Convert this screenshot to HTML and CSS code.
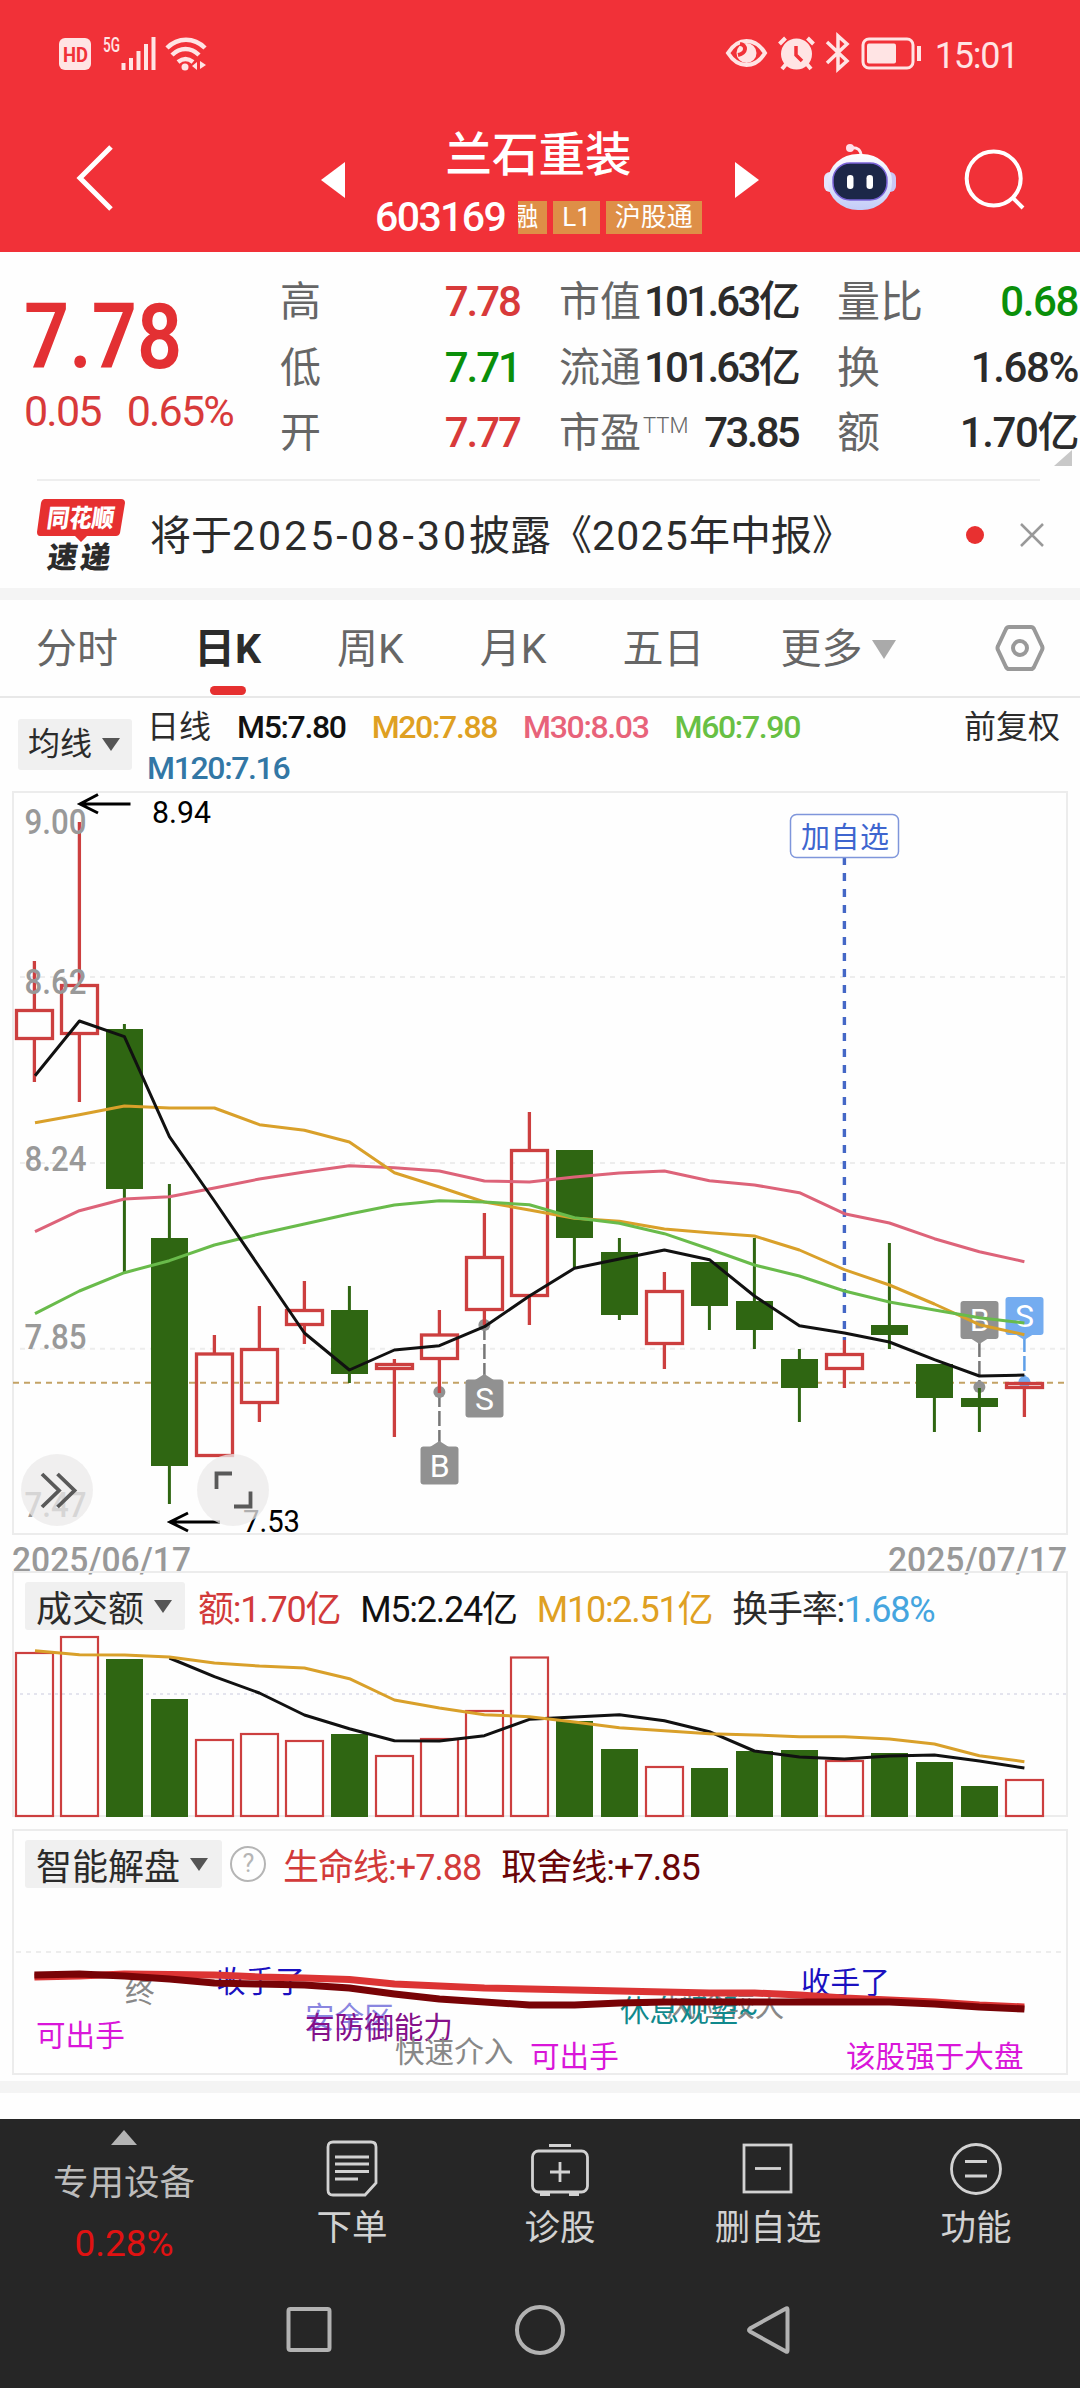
FILE: index.html
```html
<!DOCTYPE html>
<html lang="zh-CN">
<head>
    <meta charset="UTF-8">
    <meta name="viewport" content="width=device-width, initial-scale=1.0">
    <title>兰石重装 603169</title>
    <link rel="stylesheet" href="styles.css">
</head>
<body>
    <header class="header">
        <div class="status-bar">
            <svg class="status-left" width="150" height="40" viewBox="58 34 150 40">
                <rect x="59" y="38" width="32" height="32" rx="6" fill="#ffe4e4"/>
                <text x="63" y="62" font-size="21" font-weight="700" fill="#f13138" textLength="25" lengthAdjust="spacingAndGlyphs">HD</text>
                <text x="103" y="52" font-size="20" font-weight="500" fill="#ffe4e4" textLength="17" lengthAdjust="spacingAndGlyphs">5G</text>
                <path d="M123.500 63v7M131 58v12M138.500 51v19M146 44v26M153.500 37v33" stroke="#ffe4e4" stroke-width="4"/>
                <g fill="none" stroke="#ffe4e4" stroke-width="4.500">
                    <path d="M167 48c11-11 27-11 38 0M172 55c8-8 19-8 27 0M178 62c5-4 10-4 15 0"/>
                </g>
                <circle cx="185" cy="67" r="3.500" fill="#ffe4e4"/>
                <path d="M192 66l5-4v8M200 61v8l6-4z" fill="#ffe4e4"/>
            </svg>
            <div class="status-right">
                <svg width="200" height="42" viewBox="724 34 200 42" fill="none" stroke="#ffe4e4" stroke-width="4">
                    <path d="M729 54c10-16 27-16 37 0c-10 16-27 16-37 0z"/>
                    <circle cx="747.500" cy="54" r="10" fill="#ffe4e4" stroke="none"/>
                    <path d="M741 45c7 1 7 9-2 11" stroke="#f13138" stroke-width="4"/>
                    <circle cx="797.500" cy="55" r="15.500" fill="#ffe4e4" stroke="none"/>
                    <path d="M780.500 45l6-6M814.500 45l-6-6M788 64l-5 6M807 64l5 6"/>
                    <path d="M797 47v9l6 6" stroke="#f13138" stroke-width="3.500"/>
                    <path d="M828 43l20 19l-9 8v-33l9 8l-20 19" stroke-width="3.500"/>
                    <rect x="864" y="40" width="50" height="29" rx="6" stroke-width="3"/>
                    <rect x="868" y="44.500" width="29" height="20" rx="2" fill="#ffe4e4" stroke="none"/>
                    <path d="M920 47v15"/>
                </svg>
                <span class="clock">15:01</span>
            </div>
        </div>
        <div class="title-bar">
            <svg class="back" width="40" height="70" viewBox="0 0 40 70"><path d="M36 4L5 35l31 31" fill="none" stroke="#fff" stroke-width="5"/></svg>
            <svg class="prev" width="24" height="36" viewBox="0 0 24 36"><path d="M24 0v36L0 18z" fill="#fff"/></svg>
            <div class="stock">
                <h1>兰石重装</h1>
                <div class="code-row">
                    <span class="code">603169</span>
                    <span class="tag tag-cut"><span>融</span></span>
                    <span class="tag">L1</span>
                    <span class="tag">沪股通</span>
                </div>
            </div>
            <svg class="next" width="24" height="36" viewBox="0 0 24 36"><path d="M0 0v36L24 18z" fill="#fff"/></svg>
            <svg class="robot" width="74" height="70" viewBox="824 142 74 70">
                <defs>
                    <linearGradient id="head" x1="0" y1="0" x2="0" y2="1">
                        <stop offset="0" stop-color="#ffffff"/>
                        <stop offset="1" stop-color="#c3ccf8"/>
                    </linearGradient>
                </defs>
                <path d="M851 148c8-1 11 2 11 8" fill="none" stroke="#ffe9ef" stroke-width="3"/>
                <circle cx="851" cy="148" r="4" fill="#ffe0ea"/>
                <rect x="825" y="172" width="14" height="20" rx="6" fill="#e6e4fb"/>
                <rect x="883" y="172" width="14" height="20" rx="6" fill="#c9c6f4"/>
                <rect x="829" y="154" width="64" height="56" rx="30" ry="27" fill="url(#head)"/>
                <rect x="834" y="163" width="54" height="37" rx="17" fill="#1c2748" stroke="#7a63d8" stroke-width="1.500"/>
                <rect x="848" y="175" width="6.500" height="14" rx="3.200" fill="#fff"/>
                <rect x="867.500" y="175" width="6.500" height="14" rx="3.200" fill="#fff"/>
            </svg>
            <svg class="search" width="62" height="62" viewBox="964 148 62 62" fill="none" stroke="#fff" stroke-width="4">
                <circle cx="994.700" cy="178.500" r="27"/>
                <path d="M1013 197l11 11"/>
            </svg>
        </div>
    </header>

    <section class="quote">
        <div class="price-box">
            <div class="price">7.78</div>
            <div class="change"><span>0.05</span><span>0.65%</span></div>
        </div>
        <div class="stat-col">
            <div class="stat"><span class="label">高</span><span class="up">7.78</span></div>
            <div class="stat"><span class="label">低</span><span class="down">7.71</span></div>
            <div class="stat"><span class="label">开</span><span class="up">7.77</span></div>
        </div>
        <div class="stat-col cap-col">
            <div class="stat"><span class="label">市值</span><span>101.63亿</span></div>
            <div class="stat"><span class="label">流通</span><span>101.63亿</span></div>
            <div class="stat"><span class="label">市盈<sup>TTM</sup></span><span>73.85</span></div>
        </div>
        <div class="stat-col last-col">
            <div class="stat"><span class="label">量比</span><span class="down">0.68</span></div>
            <div class="stat"><span class="label">换</span><span>1.68%</span></div>
            <div class="stat"><span class="label">额</span><span>1.70亿</span></div>
        </div>
        <span class="corner"></span>
    </section>

    <section class="news">
        <div class="news-logo">
            <svg width="90" height="74" viewBox="36 497 90 74">
                <path d="M45 498h76q4 0 4 4l-5 30q-1 3-4 3h-29l-6 6l-6-6h-35q-3 0-3-4l4-29q1-4 4-4z" fill="#e63030"/>
                <g font-weight="900" transform="skewX(-8)">
                    <text x="120" y="526" font-size="25" fill="#fff" textLength="67" lengthAdjust="spacingAndGlyphs">同花顺</text>
                    <text x="126" y="567" font-size="30" fill="#2b2b2b" textLength="63">速递</text>
                </g>
            </svg>
        </div>
        <p>将于<span class="date">2025-08-30</span>披露《<span class="year">2025</span>年中报》</p>
        <i class="dot"></i>
        <svg class="close" width="26" height="26" viewBox="0 0 26 26"><path d="M2 2l22 22M24 2L2 24" stroke="#999" stroke-width="2.500"/></svg>
    </section>

    <nav class="tabs">
        <a>分时</a>
        <a class="active">日K</a>
        <a>周K</a>
        <a>月K</a>
        <a>五日</a>
        <a class="more">更多<i class="caret"></i></a>
        <svg class="setting" width="50" height="48" viewBox="0 0 50 48" fill="none" stroke="#999" stroke-width="4">
            <path d="M14 3h22q2 0 3 2l8 17q1 2 0 4l-8 17q-1 2-3 2h-22q-2 0-3-2l-8-17q-1-2 0-4l8-17q1-2 3-2z"/>
            <circle cx="25" cy="24" r="7"/>
        </svg>
    </nav>

    <section class="legend">
        <span class="select">均线<i class="caret dark"></i></span>
        <div class="ma-list">
            <span class="name">日线</span>
            <span class="ma5">M5:7.80</span>
            <span class="ma20">M20:7.88</span>
            <span class="ma30">M30:8.03</span>
            <span class="ma60">M60:7.90</span>
            <span class="ma120">M120:7.16</span>
        </div>
        <span class="adjust">前复权</span>
    </section>

    <svg class="kline" width="1080" height="781" viewBox="0 790 1080 781">
        <rect class="frame" x="13" y="792" width="1054" height="742"/>
        <path class="grid" d="M20 977H1066M20 1163H1066M20 1348.700H1066"/>
        <path d="M13 1382.700H1066" stroke="#c3a265" stroke-width="2" stroke-dasharray="6 5"/>

        <!-- buy / sell markers -->
        <g class="marker">
            <path class="lead" d="M439.400 1392V1446M484.400 1325V1378M979.400 1342V1382"/>
            <circle cx="439.400" cy="1392" r="6"/>
            <circle cx="484.400" cy="1325" r="6"/>
            <circle cx="979.400" cy="1387" r="6"/>
            <path d="M430 1447l9.400-6l9.400 6zM475 1380l9.400-6l9.400 6zM970 1338l9.400 6l9.400-6z"/>
            <rect x="420.500" y="1446.500" width="38" height="38" rx="3"/>
            <rect x="465.500" y="1379.500" width="38" height="38" rx="3"/>
            <rect x="960.500" y="1301" width="38" height="38" rx="3"/>
            <text x="439.600" y="1477">B</text>
            <text x="484.600" y="1410">S</text>
            <text x="979.600" y="1331">B</text>
        </g>
        <g class="marker blue">
            <path class="lead" d="M1024.400 1337V1380"/>
            <circle cx="1024.400" cy="1382" r="6"/>
            <path d="M1015 1334l9.400 6l9.400-6z"/>
            <rect x="1005.500" y="1297" width="38" height="38" rx="3"/>
            <text x="1024.600" y="1327">S</text>
        </g>
        <path d="M844.400 857V1340" stroke="#4467c6" stroke-width="3.400" stroke-dasharray="8 8"/>
        <rect x="790.500" y="814.500" width="108" height="43" rx="6" fill="#fff" stroke="#7f96db" stroke-width="1.500"/>
        <text x="801" y="847.500" font-size="29" fill="#3f66cf" textLength="88">加自选</text>

        <!-- candles -->
        <g class="red">
            <path d="M34.400 961V1010M34.400 1038V1082M79.400 822V985M79.400 1034V1102M214.400 1335V1353M259.400 1306V1349M259.400 1403V1422M304.400 1281V1310M304.400 1325V1344M394.400 1359V1363M394.400 1370V1437M439.400 1310V1334M439.400 1360V1393M484.400 1213V1257M484.400 1310V1325M529.400 1112V1150M529.400 1296V1325M664.400 1272V1291M664.400 1344V1369M844.400 1340V1354M844.400 1369V1388M1024.400 1389V1417"/>
            <rect x="16.500" y="1010.500" width="36" height="28"/>
            <rect x="61.500" y="985.500" width="36" height="48"/>
            <rect x="196.500" y="1354" width="36" height="101.500"/>
            <rect x="241.500" y="1349.500" width="36" height="53"/>
            <rect x="286.500" y="1310.500" width="36" height="14"/>
            <rect x="376.500" y="1364.500" width="36" height="4"/>
            <rect x="421.500" y="1335" width="36" height="23.500"/>
            <rect x="466.500" y="1257.500" width="36" height="52"/>
            <rect x="511.500" y="1150.500" width="36" height="145"/>
            <rect x="646.500" y="1291.500" width="36" height="52"/>
            <rect x="826.500" y="1354.500" width="36" height="14"/>
            <rect x="1006.500" y="1383.500" width="36" height="4"/>
        </g>
        <g class="green">
            <path d="M124.400 1024V1272M169.400 1184V1504M349.400 1286V1383M574.400 1150V1268M619.400 1238V1320M709.400 1262V1330M754.400 1238V1349M799.400 1349V1422M889.400 1243V1349M934.400 1364V1432M979.400 1388V1432"/>
            <rect x="106" y="1029" width="37" height="160"/>
            <rect x="151" y="1238" width="37" height="228"/>
            <rect x="331" y="1310" width="37" height="64"/>
            <rect x="556" y="1150" width="37" height="88"/>
            <rect x="601" y="1252" width="37" height="63"/>
            <rect x="691" y="1262" width="37" height="44"/>
            <rect x="736" y="1301" width="37" height="29"/>
            <rect x="781" y="1359" width="37" height="29"/>
            <rect x="871" y="1325" width="37" height="10"/>
            <rect x="916" y="1364" width="37" height="34"/>
            <rect x="961" y="1398" width="37" height="9"/>
        </g>

        <!-- moving averages -->
        <g class="lines">
            <polyline stroke="#dd6379" points="35,1231.700 79.400,1210.700 124.400,1199 169.400,1196.700 214.400,1188 259.400,1179 304.400,1172 349.400,1165.700 394.400,1167.700 439.400,1171 484.400,1181 529.400,1182 574.400,1177 619.400,1173 664.400,1171 709.400,1180.700 754.400,1185 799.400,1192.700 844.400,1213.700 889.400,1223 934.400,1238.700 979.400,1251.700 1024.400,1261.700"/>
            <polyline stroke="#d9a02a" points="35,1122.700 79.400,1114.700 124.400,1106 169.400,1108 214.400,1108 259.400,1124.700 304.400,1130.300 349.400,1142 394.400,1172.700 439.400,1187 484.400,1202 529.400,1210 574.400,1218.300 619.400,1221.300 664.400,1229 709.400,1232.700 754.400,1236 799.400,1250 844.400,1269.700 889.400,1285 934.400,1304 979.400,1324.700 1024.400,1334.700"/>
            <polyline stroke="#69bb4b" points="35,1313.700 79.400,1291 124.400,1272.700 169.400,1260.700 214.400,1245 259.400,1234 304.400,1224 349.400,1214 394.400,1205 439.400,1200.700 484.400,1202 529.400,1204.700 574.400,1217.700 619.400,1223.300 664.400,1233.700 709.400,1249 754.400,1265 799.400,1276 844.400,1291 889.400,1302 934.400,1310 979.400,1317.700 1024.400,1323"/>
            <polyline stroke="#111" points="35,1075.700 79.400,1021 124.400,1036.700 169.400,1136.700 214.400,1201 259.400,1267 304.400,1333 349.400,1370 394.400,1350 439.400,1345.700 484.400,1326.700 529.400,1296 574.400,1268.300 619.400,1259 664.400,1250 709.400,1259.700 754.400,1296 799.400,1325.700 844.400,1333 889.400,1342 934.400,1359.700 979.400,1376 1024.400,1375"/>
        </g>

        <g class="axis">
            <text x="24.500" y="834" textLength="62" lengthAdjust="spacingAndGlyphs">9.00</text>
            <text x="24.500" y="993.500" textLength="62" lengthAdjust="spacingAndGlyphs">8.62</text>
            <text x="24.500" y="1170.500" textLength="62" lengthAdjust="spacingAndGlyphs">8.24</text>
            <text x="24.500" y="1348.500" textLength="62" lengthAdjust="spacingAndGlyphs">7.85</text>
            <text x="24.500" y="1517" textLength="62" lengthAdjust="spacingAndGlyphs">7.47</text>
            <text x="12" y="1572" textLength="179" lengthAdjust="spacingAndGlyphs">2025/06/17</text>
            <text x="888" y="1572" textLength="179" lengthAdjust="spacingAndGlyphs">2025/07/17</text>
        </g>
        <g fill="none" stroke="#000" stroke-width="3">
            <path d="M130.500 804H80M98 794.500L80 804l18 9M220 1522H170M188 1513l-18 9l18 9"/>
        </g>
        <text x="152" y="823" font-size="31" textLength="59" lengthAdjust="spacingAndGlyphs">8.94</text>
        <text x="243" y="1532" font-size="31" textLength="57" lengthAdjust="spacingAndGlyphs">7.53</text>

        <!-- floating buttons -->
        <g fill="#ebe9e9" fill-opacity=".75">
            <circle cx="57" cy="1490" r="36"/>
            <circle cx="233" cy="1490" r="36"/>
        </g>
        <g fill="none" stroke="#595959" stroke-width="3.800">
            <path d="M42 1474l17 16.500l-17 16.500M57.500 1474l17 16.500l-17 16.500"/>
            <path d="M216.500 1489v-15.500h15.500M234 1506.500h16.500v-15"/>
        </g>
    </svg>

    <section class="panel volume">
        <svg width="1080" height="258" viewBox="0 1571 1080 258">
            <rect class="frame" x="13" y="1572" width="1054" height="244"/>
            <path d="M20 1694H1066" stroke="#e4e4ee" stroke-width="2" stroke-dasharray="3 4"/>
            <g class="red thin">
                <rect x="16" y="1653" width="37" height="163"/>
                <rect x="61" y="1637" width="37" height="179"/>
                <rect x="196" y="1740" width="37" height="76"/>
                <rect x="241" y="1734" width="37" height="82"/>
                <rect x="286" y="1741" width="37" height="75"/>
                <rect x="376" y="1756" width="37" height="60"/>
                <rect x="421" y="1739" width="37" height="77"/>
                <rect x="466" y="1711" width="37" height="105"/>
                <rect x="511" y="1657.500" width="37" height="158.500"/>
                <rect x="646" y="1767" width="37" height="49"/>
                <rect x="826" y="1761" width="37" height="55"/>
                <rect x="1006" y="1780" width="37" height="36"/>
            </g>
            <g class="green">
                <rect x="106" y="1659" width="37" height="158"/>
                <rect x="151" y="1699" width="37" height="118"/>
                <rect x="331" y="1734" width="37" height="83"/>
                <rect x="556" y="1721" width="37" height="96"/>
                <rect x="601" y="1749" width="37" height="68"/>
                <rect x="691" y="1768" width="37" height="49"/>
                <rect x="736" y="1751" width="37" height="66"/>
                <rect x="781" y="1750" width="37" height="67"/>
                <rect x="871" y="1753" width="37" height="64"/>
                <rect x="916" y="1762" width="37" height="55"/>
                <rect x="961" y="1786" width="37" height="31"/>
            </g>
            <g class="lines">
                <polyline stroke="#111" points="169.400,1658 214.400,1676.700 259.400,1693 304.400,1715 349.400,1728.700 394.400,1740.700 439.400,1741 484.400,1735.700 529.400,1719.300 574.400,1717 619.400,1714.700 664.400,1720.700 709.400,1731.700 754.400,1751 799.400,1757 844.400,1759 889.400,1756 934.400,1755 979.400,1761 1024.400,1768"/>
                <polyline stroke="#d9a02a" points="35,1650.700 79.400,1654.700 124.400,1655 169.400,1657 214.400,1663 259.400,1666 304.400,1668 349.400,1678.700 394.400,1700 439.400,1708 484.400,1714.700 529.400,1716.700 574.400,1722 619.400,1727.700 664.400,1730.700 709.400,1733.700 754.400,1735 799.400,1736.700 844.400,1736.700 889.400,1739 934.400,1744 979.400,1755.700 1024.400,1761.700"/>
            </g>
        </svg>
        <div class="panel-head">
            <span class="select">成交额<i class="caret dark"></i></span>
            <span class="c-red">额:1.70亿</span>
            <span class="c-black">M5:2.24亿</span>
            <span class="ma20">M10:2.51亿</span>
            <span>换手率:<em>1.68%</em></span>
        </div>
    </section>

    <section class="panel smart">
        <svg width="1080" height="248" viewBox="0 1829 1080 248">
            <rect class="frame" x="13" y="1830" width="1054" height="244"/>
            <path class="grid" d="M16 1952H1066"/>
            <g class="tips">
                <text x="36" y="2046" fill="#d916d9">可出手</text>
                <text x="125" y="2001.500" fill="#888">终</text>
                <text x="216" y="1992" fill="#1a10c0">收手了</text>
                <text x="305" y="2028" fill="#8a86e0">安全区</text>
                <text x="305" y="2037.500" fill="#85108a">有防御能力</text>
                <text x="395" y="2061.500" fill="#888">快速介入</text>
                <text x="530" y="2066.500" fill="#d916d9">可出手</text>
                <text x="666" y="2016" fill="#888">风险较大</text>
                <text x="620" y="2021" fill="#10898c">休息观望~</text>
                <text x="801" y="1993" fill="#1a10c0">收手了</text>
                <text x="846" y="2066.500" fill="#d916d9">该股强于大盘</text>
            </g>
            <g class="lines thick">
                <polyline stroke="#dc3434" points="34.400,1977 79.400,1976 124.400,1974 169.400,1974.500 214.400,1975 259.400,1977 304.400,1978 349.400,1979.500 394.400,1984 439.400,1986 484.400,1988 529.400,1989 574.400,1990 619.400,1991 664.400,1992 709.400,1993 754.400,1993 799.400,1995 844.400,1998 889.400,2000 934.400,2002 979.400,2005 1024.400,2007"/>
                <polyline stroke="#780306" points="34.400,1975 79.400,1974 124.400,1976 169.400,1979 214.400,1983 259.400,1984 304.400,1985 349.400,1988 394.400,1994 439.400,1999 484.400,2002 529.400,2005 574.400,2005 619.400,2003 664.400,2002 889.400,2002 934.400,2004 979.400,2007 1024.400,2009"/>
            </g>
        </svg>
        <div class="panel-head">
            <span class="select">智能解盘<i class="caret dark"></i></span>
            <i class="help">?</i>
            <span class="c-red">生命线:+7.88</span>
            <span class="c-dark">取舍线:+7.85</span>
        </div>
    </section>

    <div class="divider"></div>

    <footer class="footer">
        <div class="toolbar">
            <div class="sector">
                <i class="arrow-up"></i>
                <span>专用设备</span>
                <b>0.28%</b>
            </div>
            <div class="tool">
                <svg width="58" height="58" viewBox="0 0 58 58">
                    <path d="M10 2h38q5 0 5 5v36l-11 12H10q-5 0-5-5V7q0-5 5-5zM12 17h34M12 24h34M12 31.500h34M12 39h23"/>
                </svg>
                <span>下单</span>
            </div>
            <div class="tool">
                <svg width="58" height="58" viewBox="0 0 58 58">
                    <rect x="1.500" y="11" width="55" height="41" rx="6"/>
                    <path d="M18 5.500h22M29 22v20M19 32h20M9 54.500h10M38 54.500h10"/>
                </svg>
                <span>诊股</span>
            </div>
            <div class="tool">
                <svg width="58" height="58" viewBox="0 0 58 58">
                    <rect x="5" y="5" width="47" height="47"/>
                    <path d="M16 28.500h26"/>
                </svg>
                <span>删自选</span>
            </div>
            <div class="tool">
                <svg width="58" height="58" viewBox="0 0 58 58">
                    <circle cx="29" cy="29" r="24.500"/>
                    <path d="M18 21.500h22M18 36h22"/>
                </svg>
                <span>功能</span>
            </div>
        </div>
        <svg class="sys-nav" width="1080" height="60" viewBox="0 2300 1080 60">
            <rect x="288.500" y="2309" width="41" height="41" rx="2"/>
            <circle cx="540" cy="2330" r="23"/>
            <path d="M786 2308.500q1.500-1 1.500 1v41q0 2-1.500 1l-36-20q-2-1.500 0-3z"/>
        </svg>
    </footer>
</body>
</html>
```
FILE: styles.css
```css
* {
    box-sizing: border-box;
}

body {
    margin: 0;
    width: 1080px;
    font-family: Roboto, "Noto Sans CJK SC", sans-serif;
    background: #fefefe;
    color: #2b2b2b;
    overflow-x: hidden;
}

svg {
    display: block;
    flex: none;
    overflow: visible;
}

i, em {
    font-style: normal;
}

/* Header */
.header {
    height: 252px;
    background: #f13138;
    color: #fff;
}

.status-bar {
    display: flex;
    justify-content: space-between;
    align-items: center;
    height: 108px;
    padding: 0 62px 0 58px;
}

.status-right {
    display: flex;
    align-items: center;
    gap: 12px;
}

.clock {
    font-size: 36px;
    letter-spacing: -1.3px;
    color: #ffe4e4;
    line-height: 40px;
    padding-top: 4px;
}

.title-bar {
    display: flex;
    align-items: flex-start;
    height: 144px;
    padding-left: 75px;
}

.back {
    margin-top: 35px;
}

.prev {
    margin: 54px 0 0 206px;
}

.stock {
    width: 390px;
    height: 144px;
    padding-top: 15px;
    text-align: center;
}

.stock h1 {
    margin: 0 3px 0 0;
    font-size: 46.500px;
    font-weight: 500;
    line-height: 64px;
}

.code-row {
    display: flex;
    align-items: center;
    gap: 6px;
    height: 60px;
    margin-left: 30px;
}

.code {
    font-size: 41px;
    font-weight: 500;
    letter-spacing: -1.6px;
    margin-right: 7px;
}

.tag {
    height: 33px;
    padding: 0 9px;
    background: #de8f47;
    font-size: 26px;
    line-height: 33px;
}

.tag-cut {
    display: flex;
    justify-content: flex-end;
    width: 29px;
    overflow: hidden;
}

.next {
    margin-top: 54px;
}

.robot {
    margin: 34px 0 0 64px;
}

.search {
    margin: 40px 0 0 66px;
}

/* Quote */
.quote {
    position: relative;
    display: flex;
    height: 229px;
    padding-top: 17px;
}

.quote:after {
    content: "";
    position: absolute;
    left: 37px;
    right: 40px;
    bottom: 0;
    border-bottom: 2px solid #eee;
}

.price-box {
    width: 280px;
    padding-left: 24px;
    color: #e33033;
}

.price {
    margin-top: 22px;
    font-size: 90px;
    font-weight: 600;
    line-height: 94px;
    transform: scaleX(.88);
    transform-origin: left;
}

.change {
    display: flex;
    gap: 26px;
    margin-top: 1px;
    font-size: 43px;
    letter-spacing: -1.8px;
    line-height: 50px;
    color: #d83a3a;
}

.stat-col {
    width: 240px;
}

.stat {
    display: flex;
    justify-content: space-between;
    height: 65.500px;
    font-size: 42px;
    font-weight: 500;
    line-height: 66px;
    letter-spacing: -2px;
    white-space: nowrap;
}

.stat .label {
    color: #666;
    font-size: 41px;
    font-weight: 400;
    letter-spacing: 0;
}

.cap-col {
    margin-left: 39px;
    width: 239px;
}

.cap-col .stat {
    letter-spacing: -2.7px;
}

.last-col {
    margin-left: 39px;
    width: 241px;
}

.last-col .stat {
    letter-spacing: -1.4px;
}

.last-col .label {
    font-size: 43px;
}

.stat sup {
    font-size: 22px;
    font-weight: 300;
    line-height: 0;
    vertical-align: 14px;
    margin-left: 2px;
}

.up {
    color: #d83a3a;
}

.down {
    color: #0a8f0a;
}

.corner {
    position: absolute;
    right: 8px;
    bottom: 15px;
    border-left: 18px solid transparent;
    border-bottom: 16px solid #c8c8c8;
}

/* News */
.news {
    display: flex;
    align-items: center;
    height: 119px;
    padding: 0 35px 0 36px;
    border-bottom: 12px solid #f4f4f4;
}

.news p {
    flex: 1;
    margin: 2px 0 0 24px;
    font-size: 41px;
    line-height: 60px;
    white-space: nowrap;
}

.news .date {
    letter-spacing: 3px;
}

.news .year {
    letter-spacing: 1.2px;
}

.dot {
    width: 18px;
    height: 18px;
    border-radius: 50%;
    background: #e83030;
    margin-right: 35px;
}

/* Tabs */
.tabs {
    display: flex;
    align-items: center;
    gap: 76px;
    height: 98px;
    padding: 0 35px 0 36px;
    border-bottom: 2px solid #e8e8e8;
    font-size: 41px;
    color: #666;
}

.tabs a {
    position: relative;
    padding-top: 3px;
    line-height: 93px;
    white-space: nowrap;
}

.tabs .active {
    color: #2b2b2b;
    font-weight: 700;
}

.tabs .active:after {
    content: "";
    position: absolute;
    left: 50%;
    bottom: 1px;
    width: 36px;
    height: 9px;
    margin-left: -18px;
    border-radius: 5px;
    background: #e63030;
}

.tabs .more {
    display: flex;
    align-items: center;
}

.setting {
    margin-left: auto;
}

.caret {
    margin-left: 9px;
    border: 12px solid transparent;
    border-top: 19px solid #aaa;
    border-bottom: 0;
}

.caret.dark {
    border-width: 13px 9px 0;
    border-top-color: #555;
    margin-left: 10px;
}

/* Legend */
.legend {
    display: flex;
    align-items: flex-start;
    height: 92px;
    padding: 9px 20px 0 18px;
    font-size: 32px;
    line-height: 41px;
}

.select {
    display: flex;
    align-items: center;
    background: #f0f0f0;
    border-radius: 3px;
    white-space: nowrap;
}

.legend .select {
    width: 114px;
    height: 51px;
    margin: 12px 15px 0 0;
    padding-left: 10px;
}

.ma-list {
    display: flex;
    flex-wrap: wrap;
    flex: 1;
    column-gap: 26px;
    font-weight: 500;
    letter-spacing: -1.350px;
}

.ma-list .name {
    font-weight: 400;
    letter-spacing: 0;
}

.ma5, .c-black {
    color: #111;
}

.ma20 {
    color: #dfa022;
}

.ma30 {
    color: #e8637a;
}

.ma60 {
    color: #68c044;
}

.ma120 {
    color: #3277a5;
}

/* Charts */
.frame {
    fill: none;
    stroke: #ececec;
    stroke-width: 2;
}

.grid {
    stroke: #ededed;
    stroke-width: 2;
    stroke-dasharray: 5 5;
}

.red {
    fill: none;
    stroke: #cc3f3f;
    stroke-width: 3.300;
}

.red.thin {
    stroke-width: 2.200;
}

.green {
    fill: #2f6612;
}

.green path {
    stroke: #2f6612;
    stroke-width: 3;
}

.lines {
    fill: none;
    stroke-width: 3;
    stroke-linejoin: round;
}

.lines.thick {
    stroke-width: 7;
}

.axis {
    font-size: 35px;
    font-weight: 500;
    fill: #999;
}

.marker {
    fill: #919191;
}

.marker.blue {
    fill: #74acf0;
}

.marker .lead {
    stroke: #777;
    stroke-width: 2.500;
    stroke-dasharray: 15 4;
}

.marker.blue .lead {
    stroke: #5f9fe8;
}

.marker text {
    fill: #fff;
    font-size: 32px;
    text-anchor: middle;
}

/* Lower panels */
.panel {
    display: grid;
}

.panel > * {
    grid-area: 1 / 1;
}

.panel-head {
    display: flex;
    align-items: center;
    align-self: start;
    height: 48px;
    margin: 11px 0 0 25px;
    font-size: 36px;
    font-weight: 400;
    letter-spacing: -1.250px;
    white-space: nowrap;
    z-index: 1;
}

.panel-head > span {
    margin-right: 20px;
}

.panel-head .select {
    height: 48px;
    width: 160px;
    margin-right: 13px;
    padding-left: 11px;
    letter-spacing: 0;
}

.panel-head em {
    color: #45a5df;
}

.c-red {
    color: #d23a3a;
}

.c-dark {
    color: #6a0508;
}

.smart .panel-head {
    letter-spacing: -1px;
}

.smart .panel-head .select {
    width: 197px;
    margin-right: 8px;
}

.help {
    width: 36px;
    height: 36px;
    margin-right: 17px;
    border: 2.500px solid #b5b5b5;
    border-radius: 50%;
    color: #b5b5b5;
    font-size: 25px;
    line-height: 32px;
    text-align: center;
}

.tips {
    font-size: 29.600px;
}

.divider {
    height: 12px;
    margin: 4px 0 26px;
    background: #f4f4f4;
}

/* Footer */
.footer {
    height: 269px;
    background: #262626;
    color: #d2d2d2;
    font-size: 35.500px;
}

.toolbar {
    display: flex;
    height: 181px;
}

.sector {
    display: flex;
    flex-direction: column;
    align-items: center;
    width: 248px;
    padding-top: 11px;
    line-height: 50px;
    color: #bcbcbc;
}

.sector b {
    margin-top: 11px;
    font-size: 37px;
    font-weight: 400;
    color: #e01212;
}

.arrow-up {
    margin-bottom: 13px;
    border: 13px solid transparent;
    border-top: 0;
    border-bottom: 15px solid #b4b4b4;
}

.tool {
    display: flex;
    flex-direction: column;
    align-items: center;
    width: 208px;
    padding-top: 21px;
    line-height: 60px;
}

.tool svg {
    fill: none;
    stroke: #d2d2d2;
    stroke-width: 2.800;
}

.sys-nav {
    fill: none;
    stroke: #b2b2b2;
    stroke-width: 4;
}
```
